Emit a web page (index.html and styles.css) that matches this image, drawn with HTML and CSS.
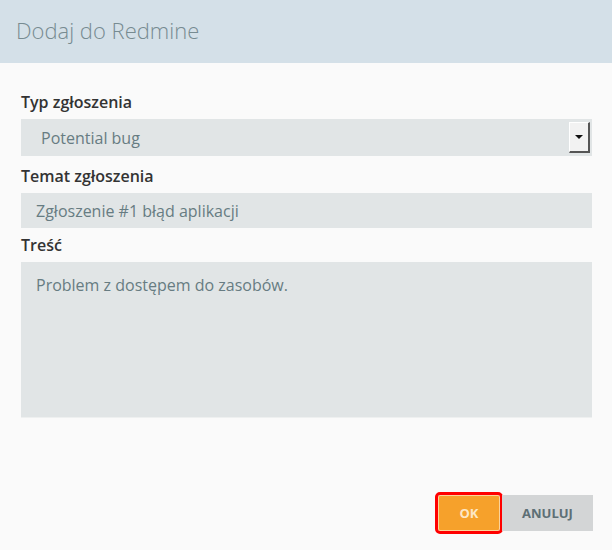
FILE: index.html
```html
<!DOCTYPE html>
<html lang="pl">
<head>
    <meta charset="UTF-8">
    <meta name="viewport" content="width=device-width, initial-scale=1.0">
    <title>Dodaj do Redmine</title>
    <link rel="stylesheet" href="styles.css">
</head>
<body>

    <div class="dialog">
        <div class="dialog-header">
            <h2>Dodaj do Redmine</h2>
        </div>

        <div class="dialog-body">
            <label class="field-label">Typ zgłoszenia</label>
            <div class="select-box">
                <span class="select-value">Potential bug</span>
                <span class="select-arrow"></span>
            </div>

            <label class="field-label">Temat zgłoszenia</label>
            <div class="text-input">Zgłoszenie #1 błąd aplikacji</div>

            <label class="field-label">Treść</label>
            <div class="text-area">Problem z dostępem do zasobów.</div>
        </div>

        <div class="dialog-footer">
            <button class="btn btn-ok">OK</button>
            <button class="btn btn-cancel">Anuluj</button>
        </div>
    </div>

</body>
</html>
```

FILE: styles.css
```css
body {
    margin: 0;
    font-family: "Open Sans", "Liberation Sans", sans-serif;
    background-color: #fafafa;
}
.dialog {
    width: 612px;
    height: 550px;
    display: flex;
    flex-direction: column;
}
.dialog-header {
    height: 63px;
    background-color: #d4e0e8;
    display: flex;
    align-items: center;
    padding-left: 16px;
}
.dialog-header h2 {
    margin: 0;
    font-size: 22px;
    font-weight: 300;
    color: #778b91;
    position: relative;
    top: -2px;
}
.dialog-body {
    padding: 29px 20px 0 21px;
    display: flex;
    flex-direction: column;
}
.field-label {
    display: block;
    font-size: 16px;
    font-weight: 600;
    line-height: 20px;
    color: #333;
    margin-bottom: 7px;
}
.select-box, .text-input, .text-area {
    background-color: #e1e5e6;
    color: #677c82;
    font-size: 16px;
    box-sizing: border-box;
}
.select-box {
    height: 37px;
    padding: 0 2px 0 20px;
    margin-bottom: 10px;
    display: flex;
    align-items: center;
    justify-content: space-between;
}
.select-arrow {
    width: 21px;
    height: 31px;
    box-sizing: border-box;
    background-color: #f2f2f2;
    border-top: 1px solid #fff;
    border-left: 1px solid #fff;
    border-right: 2px solid #555;
    border-bottom: 2px solid #555;
    display: flex;
    align-items: center;
    justify-content: center;
}
.select-arrow::before {
    content: '';
    border-left: 4px solid transparent;
    border-right: 4px solid transparent;
    border-top: 4px solid #111;
}
.text-input {
    height: 35px;
    padding: 0 15px;
    margin-bottom: 7px;
    display: flex;
    align-items: center;
}
.text-area {
    height: 156px;
    padding: 12px 15px;
    border-bottom: 1px solid #eef0f0;
}
.dialog-footer {
    margin-top: auto;
    padding: 0 19px 19px 0;
    display: flex;
    justify-content: flex-end;
    align-items: center;
}
.btn {
    font-family: inherit;
    font-size: 13px;
    font-weight: 700;
    text-transform: uppercase;
    border: none;
    height: 36px;
    cursor: pointer;
}
.btn-ok {
    width: 62px;
    background-color: #f6a12b;
    color: #fde7c4;
    border: 1px solid #fbd49a;
    outline: 3px solid #ff0000;
    outline-offset: 0;
    border-radius: 2px;
    margin-right: 2px;
}
.btn-cancel {
    width: 91px;
    background-color: #d3d5d6;
    color: #5d6f75;
}
```
